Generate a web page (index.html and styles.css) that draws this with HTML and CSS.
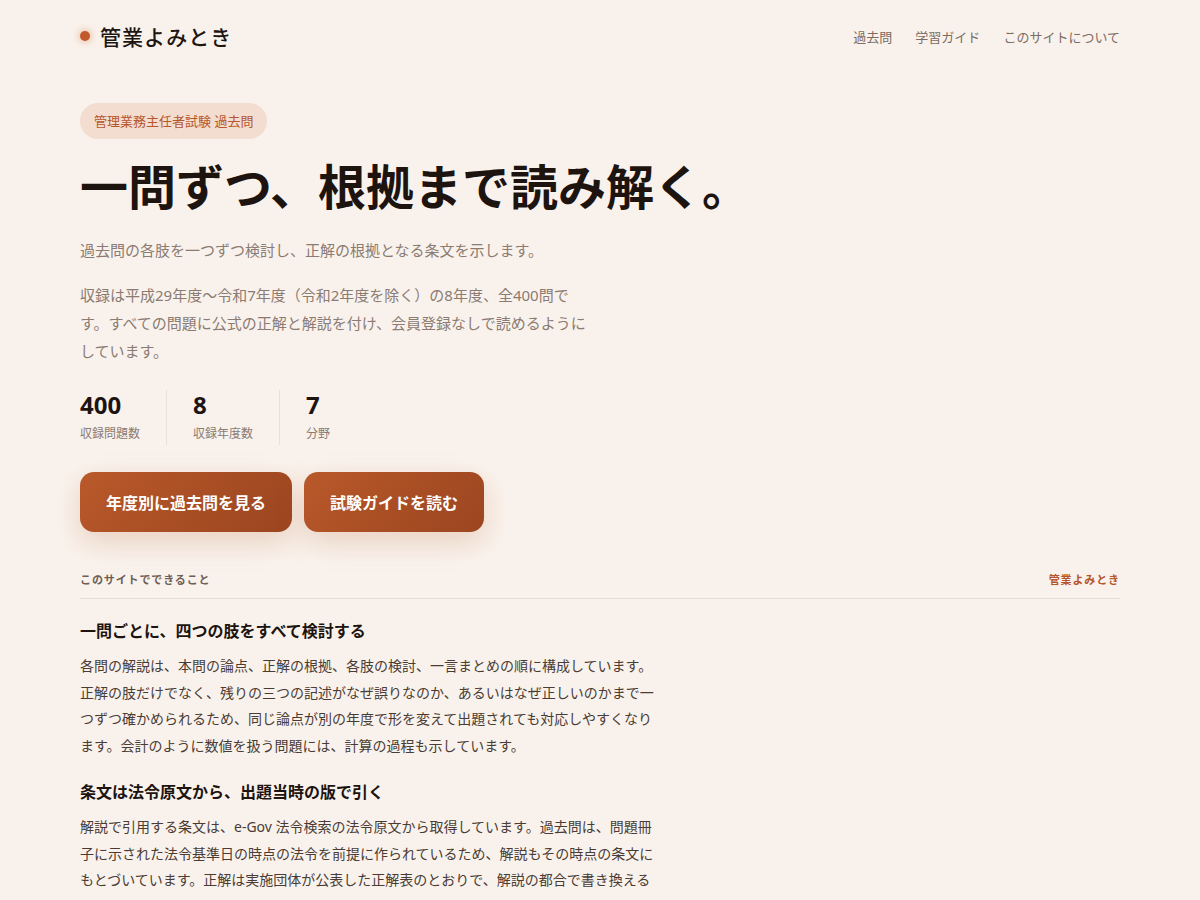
FILE: index.html
```html
<!DOCTYPE html>
<html lang="ja">
<head>
<meta charset="utf-8">
<title>管業よみとき</title>
<link rel="stylesheet" href="styles.css">
</head>
<body>
<div class="page">
  <header class="header">
    <a class="brand" href="#"><span class="brand-dot"></span><span class="brand-name">管業よみとき</span></a>
    <nav class="nav">
      <a href="#">過去問</a>
      <a href="#">学習ガイド</a>
      <a href="#">このサイトについて</a>
    </nav>
  </header>

  <section class="hero">
    <span class="pill">管理業務主任者試験 過去問</span>
    <h1 class="title">一問ずつ、根拠まで読み解く。</h1>
    <p class="lead">過去問の各肢を一つずつ検討し、正解の根拠となる条文を示します。</p>
    <p class="desc">収録は平成29年度～令和7年度（令和2年度を除く）の8年度、全400問です。すべての問題に公式の正解と解説を付け、会員登録なしで読めるようにしています。</p>
    <div class="stats">
      <div class="stat"><div class="stat-num">400</div><div class="stat-label">収録問題数</div></div>
      <div class="stat"><div class="stat-num">8</div><div class="stat-label">収録年度数</div></div>
      <div class="stat"><div class="stat-num">7</div><div class="stat-label">分野</div></div>
    </div>
    <div class="actions">
      <a class="btn" href="#">年度別に過去問を見る</a>
      <a class="btn" href="#">試験ガイドを読む</a>
    </div>
  </section>

  <section class="features">
    <div class="section-head">
      <span class="section-label">このサイトでできること</span>
      <span class="section-brand">管業よみとき</span>
    </div>
    <article class="feature">
      <h2>一問ごとに、四つの肢をすべて検討する</h2>
      <p>各問の解説は、本問の論点、正解の根拠、各肢の検討、一言まとめの順に構成しています。正解の肢だけでなく、残りの三つの記述がなぜ誤りなのか、あるいはなぜ正しいのかまで一つずつ確かめられるため、同じ論点が別の年度で形を変えて出題されても対応しやすくなります。会計のように数値を扱う問題には、計算の過程も示しています。</p>
    </article>
    <article class="feature">
      <h2>条文は法令原文から、出題当時の版で引く</h2>
      <p>解説で引用する条文は、e-Gov 法令検索の法令原文から取得しています。過去問は、問題冊子に示された法令基準日の時点の法令を前提に作られているため、解説もその時点の条文にもとづいています。正解は実施団体が公表した正解表のとおりで、解説の都合で書き換えることはありません。</p>
    </article>
  </section>
</div>
</body>
</html>
```

FILE: styles.css
```css
* { box-sizing: border-box; }
html, body { margin: 0; padding: 0; }
body {
  background: #f9f2ec;
  color: #1f1612;
  font-family: "Noto Sans", "Noto Sans CJK JP", sans-serif;
}
a { text-decoration: none; color: inherit; }
.page {
  width: 1040px;
  margin: 0 auto;
}
.header {
  height: 72px;
  display: flex;
  align-items: center;
  justify-content: space-between;
}
.brand {
  display: flex;
  align-items: center;
  gap: 10px;
}
.brand-dot {
  width: 10px;
  height: 10px;
  border-radius: 50%;
  background: #c2592a;
  box-shadow: 0 0 6px 2px rgba(214, 120, 70, 0.35);
}
.brand-name {
  font-size: 21px;
  font-weight: 500;
  letter-spacing: 0.05em;
  color: #1f1612;
}
.nav {
  display: flex;
  gap: 23px;
  font-size: 13px;
  color: #7c6c63;
}
.hero {
  padding-top: 31px;
}
.pill {
  display: inline-block;
  height: 36px;
  line-height: 36px;
  padding: 0 14px;
  border-radius: 18px;
  background: #f3ddd0;
  color: #b5562b;
  font-size: 13px;
}
.title {
  margin: 18px 0 0;
  font-size: 48px;
  line-height: 60px;
  font-weight: 700;
  letter-spacing: 0;
  color: #1d1410;
}
.lead {
  margin: 21px 0 0;
  font-size: 15px;
  line-height: 24px;
  color: #8b7b72;
}
.desc {
  margin: 19px 0 0;
  max-width: 516px;
  font-size: 15px;
  line-height: 28px;
  color: #8b7b72;
}
.stats {
  display: flex;
  margin-top: 25px;
}
.stat {
  padding: 0 26px;
  border-left: 1px solid #ebdfd7;
  height: 55px;
}
.stat:first-child {
  padding-left: 0;
  border-left: none;
}
.stat-num {
  font-size: 24px;
  line-height: 29px;
  font-weight: 700;
  color: #1d1410;
}
.stat-label {
  padding-top: 4px;
  font-size: 12px;
  line-height: 22px;
  color: #8b7b72;
}
.actions {
  display: flex;
  gap: 12px;
  margin-top: 27px;
}
.btn {
  display: inline-flex;
  align-items: center;
  justify-content: center;
  height: 60px;
  padding: 0 26px;
  border-radius: 14px;
  background: linear-gradient(135deg, #b9592a 0%, #9b4520 100%);
  color: #fff;
  font-size: 16px;
  font-weight: 700;
  box-shadow: 0 10px 28px rgba(180, 90, 40, 0.22);
}
.features {
  margin-top: 39px;
}
.section-head {
  display: flex;
  justify-content: space-between;
  align-items: center;
  padding-bottom: 11px;
  border-bottom: 1px solid #e8dcd4;
}
.section-label {
  font-size: 11px;
  font-weight: 700;
  letter-spacing: 0.08em;
  color: #6e5e56;
}
.section-brand {
  font-size: 11px;
  font-weight: 700;
  letter-spacing: 0.08em;
  color: #b5562b;
}
.feature {
  max-width: 578px;
}
.feature h2 {
  margin: 19px 0 0;
  font-size: 16px;
  line-height: 26px;
  font-weight: 700;
  color: #1d1410;
}
.feature p {
  margin: 9px 0 0;
  font-size: 14px;
  line-height: 26.7px;
  color: #4a3c35;
}
.feature + .feature h2 {
  margin-top: 19px;
}
.feature + .feature p {
  margin-top: 9px;
}
```
